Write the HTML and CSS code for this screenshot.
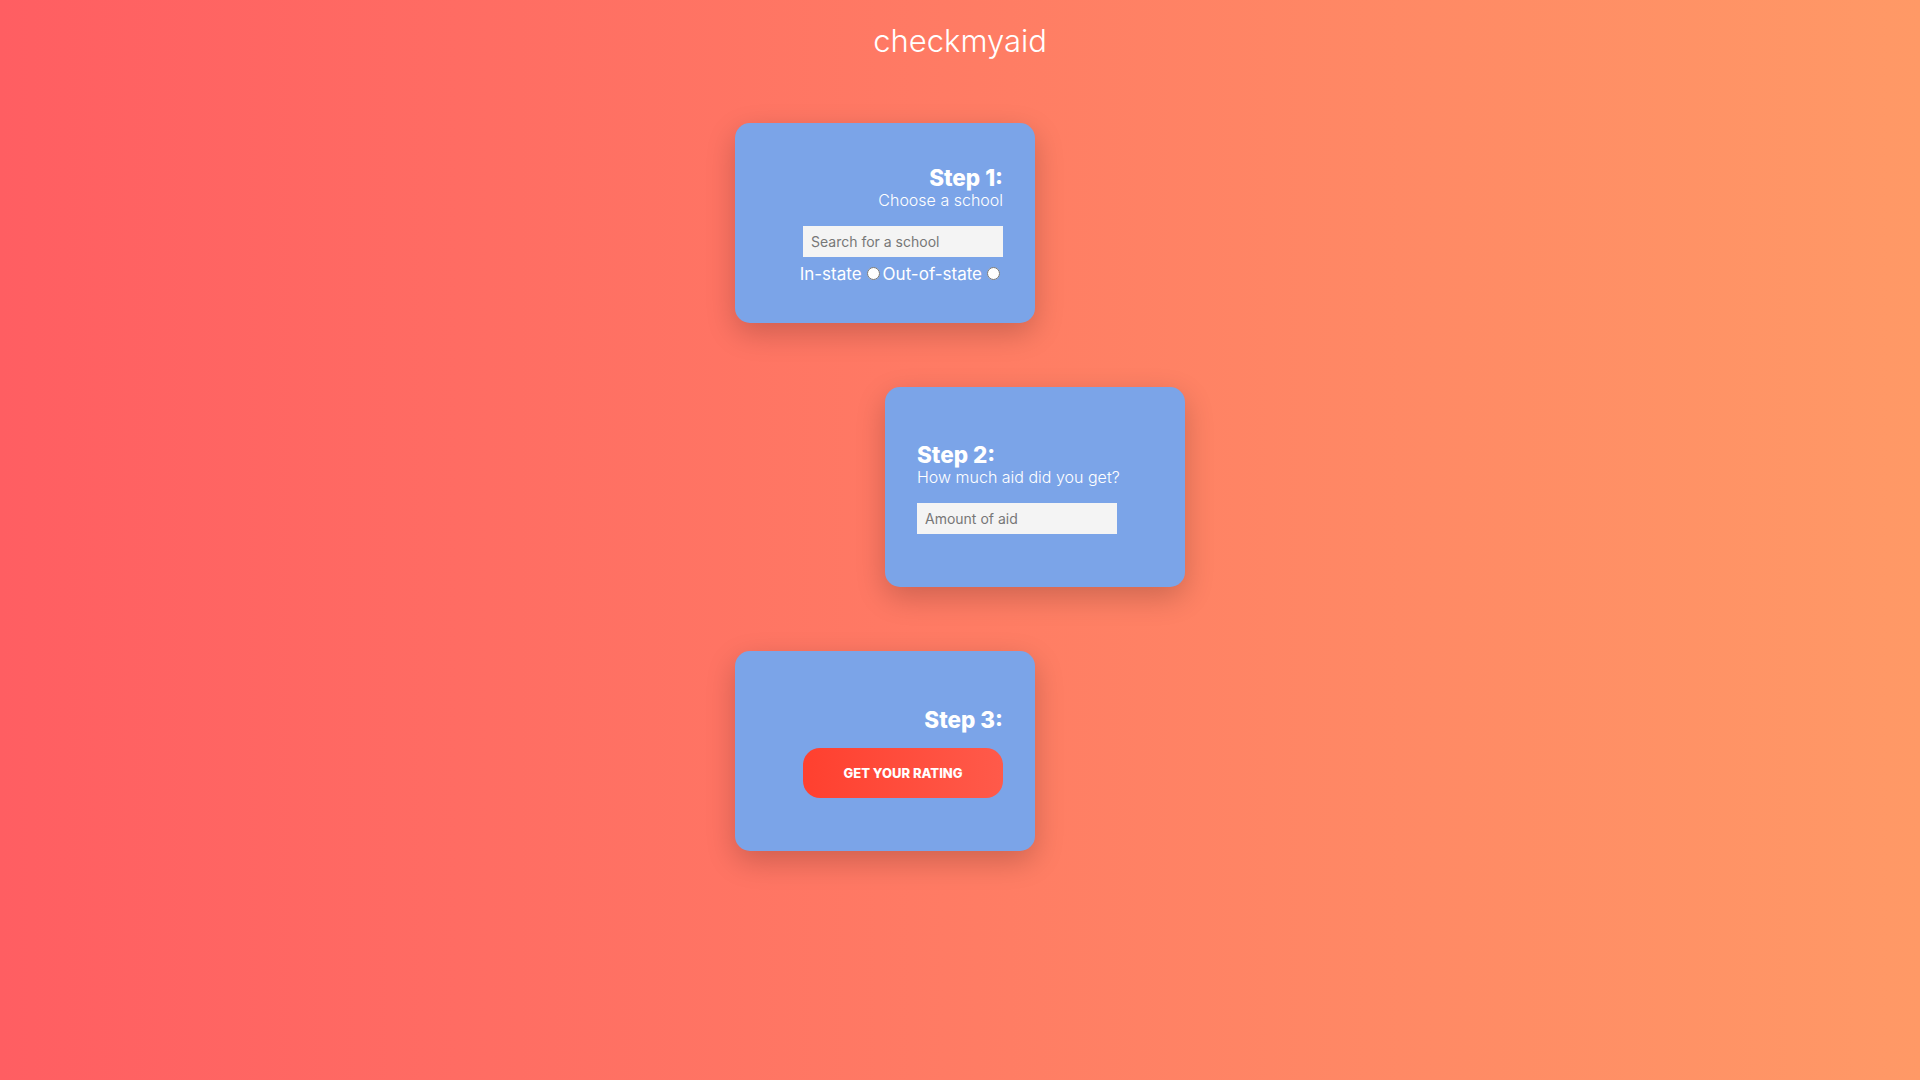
FILE: index.html
```html
<!DOCTYPE html>
<html lang="en">
<head>
<meta charset="utf-8">
<title>checkmyaid</title>
<link rel="stylesheet" href="styles.css">
</head>
<body>
<div class="page">
  <h1 class="brand">checkmyaid</h1>
  <main class="steps">
    <section class="card card-left align-right">
      <h2 class="step-title">Step 1:</h2>
      <p class="step-sub">Choose a school</p>
      <input class="field" type="text" placeholder="Search for a school">
      <div class="radios"><label class="radio-label">In-state</label><input type="radio" name="res"><label class="radio-label">Out-of-state</label><input type="radio" name="res"></div>
    </section>
    <section class="card card-right align-left">
      <h2 class="step-title">Step 2:</h2>
      <p class="step-sub">How much aid did you get?</p>
      <input class="field" type="text" placeholder="Amount of aid">
    </section>
    <section class="card card-left align-right">
      <h2 class="step-title">Step 3:</h2>
      <button class="rate-btn" type="button">GET YOUR RATING</button>
    </section>
  </main>
</div>
</body>
</html>
```

FILE: styles.css
```css
* { box-sizing: border-box; }
html, body { margin: 0; padding: 0; }
body {
  min-height: 100vh;
  background: linear-gradient(to right, #ff5e62 0%, #ff9966 100%);
  font-family: Inter, "Open Sans", "Liberation Sans", sans-serif;
  color: #fff;
}
.page {
  display: flex;
  flex-direction: column;
  align-items: center;
  padding-top: 20px;
  gap: 62px;
  min-height: 100vh;
}
.brand {
  margin: 0;
  font-size: 31px;
  line-height: 41px;
  font-weight: 300;
  color: #fff;
}
.steps {
  width: 450px;
  display: flex;
  flex-direction: column;
  gap: 64px;
}
.card {
  width: 300px;
  height: 200px;
  border-radius: 15px;
  background: #7ba4e8;
  box-shadow: 0 10px 30px rgba(0, 0, 0, 0.2);
  display: flex;
  flex-direction: column;
  justify-content: center;
  padding: 3px 32px 0;
}
.card-left { align-self: flex-start; }
.card-right { align-self: flex-end; }
.align-right { align-items: flex-end; text-align: right; }
.align-left { align-items: flex-start; text-align: left; }
.step-title {
  margin: 0;
  font-size: 22.5px;
  line-height: 24px;
  font-weight: 800;
}
.step-sub {
  margin: 0;
  font-size: 16px;
  line-height: 20px;
  font-weight: 300;
}
.field {
  margin-top: 16px;
  width: 200px;
  height: 31px;
  border: none;
  background: #f4f4f4;
  padding: 0 8px;
  font-family: inherit;
  font-size: 14px;
  color: #333;
  outline: none;
}
.field::placeholder { color: #777; }
.radios {
  margin-top: 7px;
  font-size: 17px;
  line-height: 20px;
  display: flex;
  align-items: center;
}
.radio-label { font-weight: 400; }
.radios input[type="radio"] {
  width: 13px;
  height: 13px;
  margin: 0 3px 0 5px;
}
.rate-btn {
  margin-top: 16px;
  width: 200px;
  height: 50px;
  border: none;
  border-radius: 17px;
  background: linear-gradient(to right, #ff402f, #ff5a4a);
  color: #fff;
  font-family: inherit;
  font-size: 13px;
  font-weight: 800;
  letter-spacing: 0;
  cursor: pointer;
}
```
